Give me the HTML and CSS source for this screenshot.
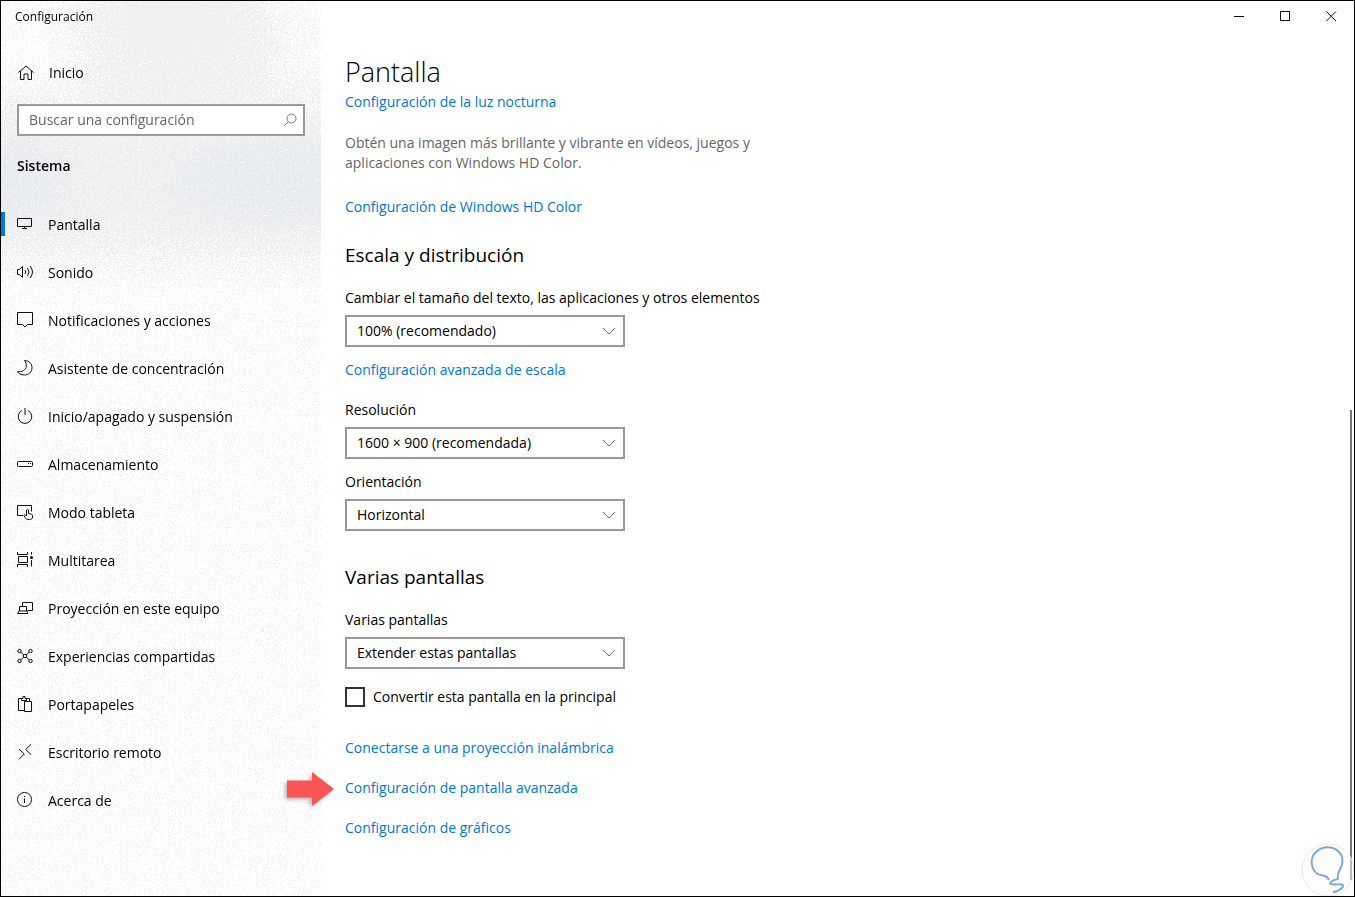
FILE: index.html
```html
<!DOCTYPE html>
<html lang="es">
<head>
	<meta charset="UTF-8">
	<title>Configuración</title>
	<link rel="stylesheet" href="styles.css">
</head>
<body>
	<div class="window">
		<aside class="sidebar">
			<!-- acrylic grain -->
			<svg class="grain" aria-hidden="true">
				<defs>
					<filter id="grain" filterUnits="userSpaceOnUse" x="-10" y="-10" width="110%" height="110%" color-interpolation-filters="sRGB">
						<feTurbulence type="fractalNoise" baseFrequency="0.83" numOctaves="2" seed="4" result="noise"/>
						<feComposite in="SourceGraphic" in2="noise" operator="arithmetic" k1="0" k2="1" k3="1" k4="-0.61"/>
						<feColorMatrix values="0 0 0 0 0.94  0 0 0 0 0.94  0 0 0 0 0.94  0 0 0 30 0"/>
					</filter>
					<radialGradient id="spot" gradientUnits="userSpaceOnUse" cx="165" cy="20" r="125">
						<stop offset="0" stop-opacity="0.5"/>
						<stop offset="0.5" stop-opacity="0.25"/>
						<stop offset="1" stop-opacity="0"/>
					</radialGradient>
					<radialGradient id="spot2" gradientUnits="userSpaceOnUse" cx="250" cy="50" r="90">
						<stop offset="0" stop-opacity="0.16"/>
						<stop offset="1" stop-opacity="0"/>
					</radialGradient>
					<linearGradient id="band" gradientUnits="userSpaceOnUse" x1="0" y1="60" x2="0" y2="290">
						<stop offset="0" stop-opacity="0"/>
						<stop offset="0.35" stop-opacity="0.3"/>
						<stop offset="0.7" stop-opacity="0.3"/>
						<stop offset="1" stop-opacity="0"/>
					</linearGradient>
				</defs>
				<g filter="url(#grain)">
					<rect x="-20" y="-20" width="120%" height="120%" fill="url(#spot)"/>
					<rect x="-20" y="-20" width="120%" height="120%" fill="url(#spot2)"/>
					<rect x="-20" y="-20" width="120%" height="120%" fill="url(#band)"/>
				</g>
			</svg>
			<div class="app-title">Configuración</div>
			<a class="nav-item home" href="#">
				<svg class="icon" viewBox="0 0 18 18"><path d="M2.500 8.500L10 2l7.500 6.500M4.500 7v8.500h3.500v-5.500h4v5.500h3.500V7"/></svg>
				<span>Inicio</span>
			</a>
			<div class="search">
				<input type="text" placeholder="Buscar una configuración" aria-label="Buscar una configuración">
				<svg class="search-icon" viewBox="0 0 14 14"><circle cx="8.500" cy="5.500" r="4.500"/><path d="M5.300 8.700L.8 13.200"/></svg>
			</div>
			<h2 class="group">Sistema</h2>
			<nav class="nav">
				<a class="nav-item active" href="#">
					<svg class="icon" viewBox="0 0 18 18"><path d="M1.500 3.500h14v8h-14zM8.500 11.500v2M6 13.500h5"/></svg>
					<span>Pantalla</span>
				</a>
				<a class="nav-item" href="#">
					<svg class="icon" viewBox="0 0 18 18"><path d="M1.500 6.500h2L6.500 3.500v11l-3-3h-2zM9 7q1.500 2 0 4M11.500 5q3 4 0 8M14 3q5 6 0 12"/></svg>
					<span>Sonido</span>
				</a>
				<a class="nav-item" href="#">
					<svg class="icon" viewBox="0 0 18 18"><path d="M1.500 1.500h15v12h-5L9 16l-2.500-2.500h-5z"/></svg>
					<span>Notificaciones y acciones</span>
				</a>
				<a class="nav-item" href="#">
					<svg class="icon" viewBox="0 0 18 18"><path d="M8.500 1.500c4.500.3 7.500 3 7.500 7.200 0 4.400-3.400 7.300-7.800 7.300-3 0-5.300-1.200-6.700-3.300 4.500.5 8.600-1.500 8.800-5.500 0-2.300-.5-4.200-1.800-5.700z"/></svg>
					<span>Asistente de concentración</span>
				</a>
				<a class="nav-item" href="#">
					<svg class="icon" viewBox="0 0 18 18"><path d="M6 3.500a6.800 6.800 0 1 0 6 0M9 1v7"/></svg>
					<span>Inicio/apagado y suspensión</span>
				</a>
				<a class="nav-item" href="#">
					<svg class="icon" viewBox="0 0 18 18"><rect x="1.500" y="6.500" width="15" height="5" rx="1"/><path d="M12 8.500h1M14 8.500h1"/></svg>
					<span>Almacenamiento</span>
				</a>
				<a class="nav-item" href="#">
					<svg class="icon" viewBox="0 0 18 18"><path d="M7 12.500H1.500v-10h14v6M10.500 13V7q1-1.500 2 0v3.500l3 .7q1 .3 1 1.300v1.500c0 1.700-1 2.500-3 2.500H12c-1.500 0-2-.7-2.700-1.800L7.800 12.500q.8-1.200 1.700-.5l1 1"/></svg>
					<span>Modo tableta</span>
				</a>
				<a class="nav-item" href="#">
					<svg class="icon" viewBox="0 0 18 18"><path d="M1.500 1v2.500h10V1M2.500 5.500h9v6h-9zM1.500 16v-2.500h10V16M15.500 1v2.500M15.500 9v6.500"/><circle class="solid" cx="15.500" cy="6.500" r="1.500"/></svg>
					<span>Multitarea</span>
				</a>
				<a class="nav-item" href="#">
					<svg class="icon" viewBox="0 0 18 18"><path d="M6.500 7V3.500h10v8h-5M3.500 12V7.500h7V12M1.500 14.500l1.500-2.500h8l1 2.500z"/></svg>
					<span>Proyección en este equipo</span>
				</a>
				<a class="nav-item" href="#">
					<svg class="icon" viewBox="0 0 18 18"><circle cx="3.500" cy="4" r="1.700"/><circle cx="14.500" cy="4" r="1.700"/><circle cx="3.500" cy="14" r="1.700"/><circle cx="14.500" cy="14" r="1.700"/><circle cx="9" cy="9" r="1.700"/><path d="M4.800 5.200l3 2.700M13.200 5.200l-3 2.700M4.800 12.800l3-2.700M13.200 12.800l-3-2.700"/></svg>
					<span>Experiencias compartidas</span>
				</a>
				<a class="nav-item" href="#">
					<svg class="icon" viewBox="0 0 18 18"><path d="M8 15.500H2.500v-12h3M10.500 3.500h3v3M5.500 5.500v-2H7v-2h2v2h1.500v2zM8.500 6.500h7v10h-7z"/></svg>
					<span>Portapapeles</span>
				</a>
				<a class="nav-item" href="#">
					<svg class="icon" viewBox="0 0 18 18"><path d="M3 6l5.300 5L3 16.300M15 1.300L9.700 6.500 15 11.500"/></svg>
					<span>Escritorio remoto</span>
				</a>
				<a class="nav-item" href="#">
					<svg class="icon" viewBox="0 0 18 18"><circle cx="8.500" cy="8.500" r="7"/><path d="M8.500 7.500V12M8.500 5v1"/></svg>
					<span>Acerca de</span>
				</a>
			</nav>
		</aside>

		<main class="main">
			<div class="titlebar">
				<button class="win-btn" aria-label="Minimizar"><svg viewBox="0 0 11 11"><path d="M0 5.500h10"/></svg></button>
				<button class="win-btn" aria-label="Maximizar"><svg viewBox="0 0 11 11"><path d="M.5.500h9v9h-9z"/></svg></button>
				<button class="win-btn" aria-label="Cerrar"><svg viewBox="0 0 11 11"><path d="M.5.500l9.500 9.500M10 .5L.5 10"/></svg></button>
			</div>
			<div class="content">
				<h1>Pantalla</h1>
				<a class="link" href="#">Configuración de la luz nocturna</a>
				<p class="hint">Obtén una imagen más brillante y vibrante en vídeos, juegos y aplicaciones con Windows HD Color.</p>
				<a class="link" href="#">Configuración de Windows HD Color</a>

				<h2>Escala y distribución</h2>
				<div class="field">
					<label for="scale">Cambiar el tamaño del texto, las aplicaciones y otros elementos</label>
					<div class="select">
						<select id="scale"><option>100% (recomendado)</option></select>
						<svg viewBox="0 0 14 8"><path d="M1 1l6 6 6-6"/></svg>
					</div>
				</div>
				<a class="link scale-link" href="#">Configuración avanzada de escala</a>
				<div class="field">
					<label for="resolution">Resolución</label>
					<div class="select">
						<select id="resolution"><option>1600 × 900 (recomendada)</option></select>
						<svg viewBox="0 0 14 8"><path d="M1 1l6 6 6-6"/></svg>
					</div>
				</div>
				<div class="field">
					<label for="orientation">Orientación</label>
					<div class="select">
						<select id="orientation"><option>Horizontal</option></select>
						<svg viewBox="0 0 14 8"><path d="M1 1l6 6 6-6"/></svg>
					</div>
				</div>

				<h2 class="displays">Varias pantallas</h2>
				<div class="field">
					<label for="multi">Varias pantallas</label>
					<div class="select">
						<select id="multi"><option>Extender estas pantallas</option></select>
						<svg viewBox="0 0 14 8"><path d="M1 1l6 6 6-6"/></svg>
					</div>
				</div>
				<div class="check">
					<input type="checkbox" id="primary">
					<label for="primary">Convertir esta pantalla en la principal</label>
				</div>
				<div class="links">
					<a class="link" href="#">Conectarse a una proyección inalámbrica</a>
					<a class="link pointed" href="#">
						<svg class="arrow" viewBox="0 0 48 36" aria-hidden="true"><path d="M1 9.500h25V1l22 17-22 17v-8.500H1z"/></svg>
						Configuración de pantalla avanzada
					</a>
					<a class="link" href="#">Configuración de gráficos</a>
				</div>
			</div>
		</main>

		<div class="scrollbar"></div>
		<svg class="bulb" viewBox="0 0 54 54" aria-hidden="true">
			<circle class="ring" cx="27" cy="27" r="26"/>
			<path d="M28 37c-1-2-2-3.500-5-4.200-4-.5-7-1.300-9.500-4.800C9 21 10 13 15.500 8.500 22 3 31 3 37 8c5 4.500 5.500 9 3.500 15-2 5-4.500 7-3.800 13"/>
			<path d="M37.500 36c-4 .5-8 2.500-8.500 4.500 1.500 2.500 9-.5 12.500 1.300 2.500 2.200-4 6.200-9.500 7.700"/>
		</svg>
	</div>
</body>
</html>
```
FILE: styles.css
```css
html,body{
	padding: 0;
	margin: 0;
}
body {
	font: 14px/20px "Open Sans", "Noto Sans", sans-serif;
	color: #000;
	background: #fff;
}
* {
	box-sizing: border-box;
}
a {
	color: inherit;
	text-decoration: none;
}
h1, h2, p {
	margin: 0;
	font-weight: 400;
}
svg {
	fill: none;
	stroke: #111;
}
.window {
	position: relative;
	display: grid;
	grid-template-columns: 320px 1fr;
	min-height: 100vh;
	border: 1px solid #000;
	overflow: hidden;
}

/* sidebar */
.sidebar {
	position: relative;
	isolation: isolate;
	background:
		radial-gradient(ellipse 180px 75px at 280px 180px, #f3f9fd, rgba(243,249,253,0)),
		radial-gradient(ellipse 130px 80px at 0 180px, #f5fafd, rgba(245,250,253,0)),
		#fff;
}
.grain {
	position: absolute;
	z-index: -1;
	top: 0;
	left: 0;
	width: 100%;
	height: 100%;
	mix-blend-mode: multiply;
}
.app-title {
	height: 48px;
	padding: 6px 14px;
	font-size: 12px;
}
.nav-item {
	display: flex;
	align-items: center;
	height: 48px;
	padding-left: 15px;
	gap: 14px;
}
.nav span {
	padding-top: 2px;
}
.home {
	gap: 15px;
}
.icon {
	width: 18px;
	height: 18px;
	flex: none;
}
.icon .solid {
	fill: #111;
	stroke: none;
}
.search {
	position: relative;
	margin: 7px 16px 0;
}
.search input {
	display: block;
	width: 100%;
	height: 32px;
	padding: 0 32px 2px 10px;
	border: 2px solid #999;
	border-radius: 0;
	background: #fff;
	font: inherit;
}
.search input::placeholder {
	color: #666;
	opacity: 1;
}
.search-icon {
	position: absolute;
	right: 8px;
	top: 9px;
	width: 14px;
	height: 14px;
	stroke: #777;
}
.group {
	padding: 20px 16px 24px;
	font-size: 14px;
	font-weight: 600;
}
.active {
	position: relative;
}
.active::before {
	content: "";
	position: absolute;
	left: 0;
	top: 12px;
	width: 4px;
	height: 24px;
	background: #0078d7;
}

/* main */
.titlebar {
	display: flex;
	justify-content: flex-end;
	height: 51px;
}
.win-btn {
	width: 46px;
	height: 32px;
	padding: 0;
	border: 0;
	background: none;
}
.win-btn svg {
	width: 11px;
	height: 11px;
}
.content {
	max-width: 480px;
	padding: 0 24px 58px;
}
.content h1 {
	font-size: 27px;
	font-weight: 300;
	line-height: 40px;
}
.content h2 {
	margin: 24px 0 19px;
	font-size: 19px;
	line-height: 28px;
}
.content .displays {
	margin-top: 32px;
}
.link {
	display: block;
	color: #0078d7;
}
.hint {
	margin: 21px 0 24px;
	color: #666;
}
.field label {
	display: block;
	margin-bottom: 7px;
}
.field + .field {
	margin-top: 13px;
}
.scale-link {
	margin: 13px 0 20px;
}
.select {
	position: relative;
	width: 280px;
}
.select select {
	display: block;
	width: 100%;
	height: 32px;
	padding: 0 32px 0 10px;
	border: 2px solid #999;
	border-radius: 0;
	background: #fff;
	color: #000;
	font: inherit;
	appearance: none;
}
.select svg {
	position: absolute;
	right: 9px;
	top: 12px;
	width: 14px;
	height: 8px;
	stroke: #777;
	pointer-events: none;
}
.check {
	display: flex;
	align-items: center;
	gap: 8px;
	margin: 18px 0 31px;
}
.check input {
	width: 20px;
	height: 20px;
	margin: 0;
	border: 2px solid #333;
	background: #fff;
	appearance: none;
}
.check input:checked {
	background: #0078d7;
}
.links {
	display: grid;
	gap: 20px;
}
.pointed {
	position: relative;
}
.arrow {
	position: absolute;
	left: -59px;
	top: -7px;
	width: 48px;
	height: 36px;
	fill: #fa5555;
	stroke: none;
	overflow: visible;
	filter: drop-shadow(-2px 2px 2px rgba(0,0,0,.3));
}
.scrollbar {
	position: absolute;
	right: 2px;
	top: 409px;
	bottom: 16px;
	width: 2px;
	background: #767676;
}
.bulb {
	position: absolute;
	right: -1px;
	bottom: -1px;
	width: 54px;
	height: 54px;
	stroke: #7ba6d8;
	stroke-width: 2;
}
.bulb .ring {
	fill: rgba(255,255,255,.5);
	stroke: #e4e8f2;
	stroke-width: 1;
}
```
